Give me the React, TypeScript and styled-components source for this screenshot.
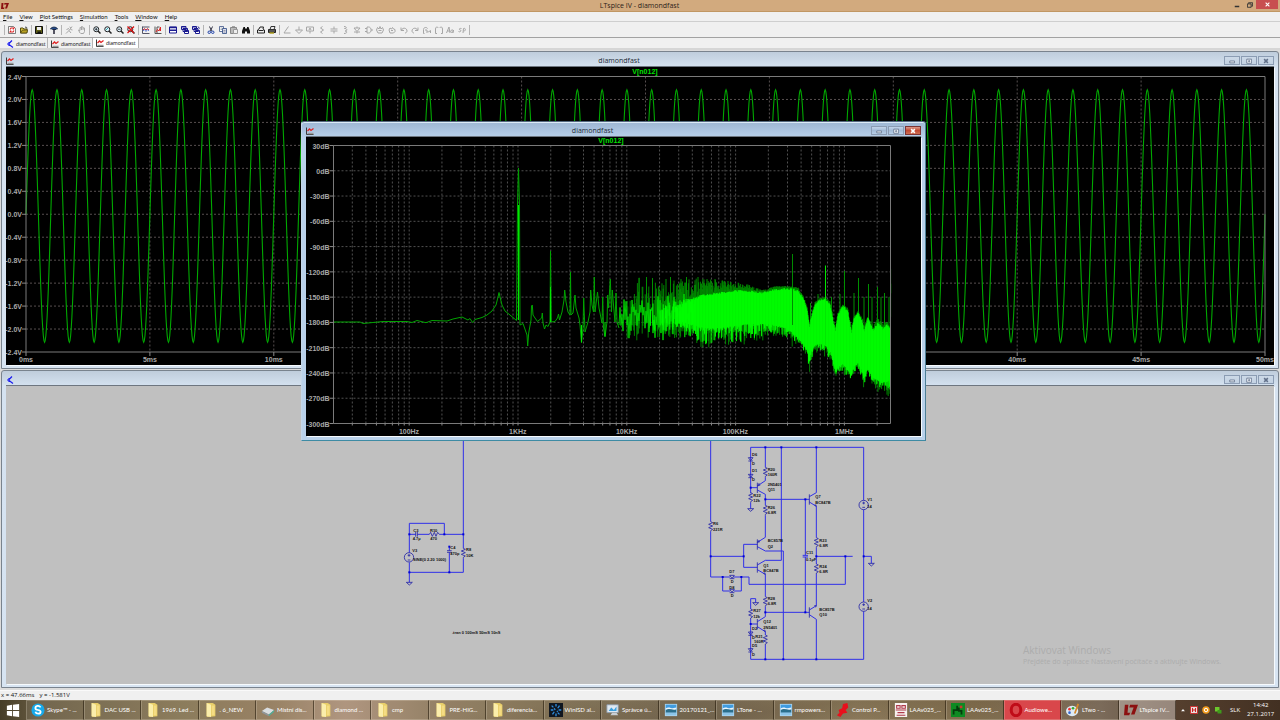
import React from "react";
import styled, { createGlobalStyle, css } from "styled-components";

const GlobalStyle = createGlobalStyle`
  * { box-sizing: border-box; }
  body { margin: 0; background: #e4e4e4; font-family: Lato, "Open Sans", sans-serif; font-size: 6px; }
  button { font: inherit; color: inherit; border: 0; padding: 0; margin: 0; background: none; }
  svg { display: block; flex-shrink: 0; }
`;

/* ---------- shell ---------- */

const Shell = styled.div`
  display: flex;
  flex-direction: column;
  min-height: 100vh;
`;

const AppTitle = styled.header`
  display: grid;
  grid-template-columns: 1fr auto 1fr;
  align-items: center;
  height: 12px;
  padding: 0 2px 0 1px;
  background: #d2aa7e;
  border-bottom: 1px solid #c19763;
`;

const AppName = styled.h1`
  margin: 0;
  font: 400 7px/11px "Open Sans", sans-serif;
  color: #2b2118;
`;

const AppControls = styled.div`
  display: flex;
  justify-content: flex-end;
  align-self: start;
`;

const AppControl = styled.button<{ $close?: boolean }>`
  display: grid;
  place-items: center;
  width: ${(p) => (p.$close ? 22 : 13)}px;
  height: 9px;
  background: ${(p) => (p.$close ? "#c84f50" : "transparent")};
`;

const MenuBar = styled.nav`
  display: flex;
  align-items: center;
  gap: 7px;
  height: 10px;
  padding: 0 3px;
  background: #f0f0f0;
  border-bottom: 1px solid #cfcfcf;
`;

const MenuItem = styled.button`
  line-height: 8px;
  color: #111;
  &::first-letter { text-decoration: underline; }
`;

const ToolBar = styled.div`
  display: flex;
  align-items: center;
  height: 16px;
  padding-left: 2px;
  background: #f0f0f0;
  border-bottom: 1px solid #a2a2a2;
`;

const ToolGroup = styled.div<{ $width: number }>`
  display: flex;
  justify-content: space-between;
  width: ${(p) => p.$width}px;
`;

const ToolSeparator = styled.span`
  width: 1px;
  height: 10px;
  margin: 0 2px;
  background: #b4b4b4;
`;

const ToolButton = styled.button`
  display: grid;
  place-items: center;
  width: 10px;
  height: 12px;
`;

const TabStrip = styled.div`
  display: flex;
  height: 12px;
  padding: 0 3px;
  background: #f0f0f0;
  border-bottom: 2px solid #d6d6d6;
`;

const DocTab = styled.button<{ $active?: boolean }>`
  display: flex;
  align-items: center;
  gap: 2px;
  width: ${(p) => (p.$active ? 46 : 45)}px;
  padding: ${(p) => (p.$active ? "0 3px 1px 3px" : "1px 2px 0 3px")};
  border-right: 1px solid #b4b4b4;
  background: ${(p) => (p.$active ? "#fff" : "transparent")};
  font: 5px/8px "Open Sans", sans-serif;
  color: #000;
`;

const Workspace = styled.main`
  position: relative;
  flex: 1;
  display: flex;
  flex-direction: column;
  gap: 1px;
  padding: 1px;
  background: #dcdcdc;
`;

/* ---------- child windows ---------- */

const activeFrame = css`
  position: absolute;
  left: 301px;
  top: 71px;
  width: 625px;
  padding-bottom: 4px;
  border-color: #54697f #4c7f97 #3d8ba4 #c4d6e8;
  background: linear-gradient(#9db6d3, #b9d1ea 16px, #b9d1ea);
  box-shadow: inset 0 1px 0 #dcebf7;
`;

const Frame = styled.section<{ $active?: boolean }>`
  border: 1px solid #79838e;
  border-radius: 3px 3px 0 0;
  padding: 0 4px 3px;
  background: linear-gradient(#bfcddc, #d5e2f0 15px, #d7e4f2);
  ${(p) => p.$active && activeFrame}
`;

const FrameTitle = styled.div`
  display: flex;
  align-items: center;
  height: 15px;
  padding-top: 2px;
`;

const FrameName = styled.h2`
  flex: 1;
  margin: 0;
  text-align: center;
  font: 400 7px/13px "Open Sans", sans-serif;
  min-height: 13px;
  color: #222b36;
`;

const FrameControls = styled.div`
  display: flex;
  gap: 1px;
`;

const FrameButton = styled.button<{ $tone: "plain" | "active" | "close" }>`
  display: grid;
  place-items: center;
  width: 16px;
  height: 9px;
  border: 1px solid ${(p) => (p.$tone === "close" ? "#7c3434" : "#8b9cb3")};
  background: ${(p) =>
    p.$tone === "close"
      ? "linear-gradient(#dc9a8c, #c24a33 50%, #cf6e52)"
      : p.$tone === "active"
        ? "linear-gradient(#c3d5e9, #a3bbd6 50%, #b7cee6)"
        : "linear-gradient(#ccd9e7, #c3d2e3)"};
`;

const FrameBody = styled.div<{ $fill: string }>`
  background: ${(p) => p.$fill};
  box-shadow: 0 -1px 0 #6e7680, 1px 1px 0 #f6fafd;
`;

const Canvas = styled.svg`
  width: 100%;
  height: auto;
`;

const Watermark = styled.aside`
  position: absolute;
  right: 50px;
  bottom: 24px;
  width: 207px;
  color: #acacac;
  font-family: "Open Sans", sans-serif;
  white-space: nowrap;
`;

const WatermarkTitle = styled.p`
  margin: 0;
  font-size: 10px;
  line-height: 13px;
`;

const WatermarkText = styled.p`
  margin: 0;
  font-size: 7px;
  line-height: 9px;
`;

/* ---------- bottom bars ---------- */

const StatusBar = styled.footer`
  display: flex;
  align-items: center;
  gap: 5px;
  height: 10px;
  padding-left: 1px;
  background: #f0f0f0;
  border-top: 1px solid #fafafa;
  font: 6px/9px "Open Sans", sans-serif;
  color: #111;
`;

const TaskBar = styled.nav`
  display: flex;
  height: 20px;
  color: #fff;
  background:
    linear-gradient(172deg, transparent 40%, rgba(60, 40, 15, 0.22) 60%, transparent 80%),
    linear-gradient(90deg, #453d28, #675a40 3%, #82714f 14%, #8f7757 21%, #a98d75 27%, #8c775a 34%, #7b6a4b 42%, #6f6149 55%, #887553 67%, #76623f 76%, #705f4c 86%, #553f2e 92%, #423022);
`;

const StartButton = styled.button`
  display: grid;
  place-items: center;
  width: 26px;
`;

const TaskList = styled.div`
  flex: 1;
  display: flex;
  min-width: 0;
`;

const tones = {
  normal: "rgba(255, 255, 255, 0.08)",
  active: "rgba(215, 205, 200, 0.5)",
  alert: "#d9474b",
};

const Task = styled.button<{ $tone: keyof typeof tones }>`
  flex: 1 1 0;
  min-width: 0;
  display: flex;
  align-items: center;
  gap: 2px;
  padding-left: 4px;
  border: 1px solid rgba(235, 225, 205, 0.25);
  border-right-color: rgba(30, 20, 5, 0.55);
  background: ${(p) => tones[p.$tone]};
  text-align: left;
`;

const TaskLabel = styled.span`
  white-space: nowrap;
  font: 6px/10px Lato, sans-serif;
`;

const Tray = styled.div`
  display: flex;
  align-items: center;
  gap: 4px;
  width: 104px;
  padding-left: 4px;
  font: 6px/9px "Open Sans", sans-serif;
`;

const Language = styled.span`
  margin-left: 4px;
`;

const Clock = styled.time`
  margin-left: 3px;
  text-align: center;
`;

/* ---------- icons ---------- */

type Glyph = React.ReactNode;

function Icon({ size = 8, children }: { size?: number; children: Glyph }) {
  return (
    <svg width={size} height={size} viewBox="0 0 16 16" fill="none" strokeWidth="2" aria-hidden="true">
      {children}
    </svg>
  );
}

const plotGlyph = (
  <>
    <path d="M1 1v14h14" stroke="#3a3a3a" />
    <path d="M3 13h12" stroke="#999" strokeWidth="3" />
    <path d="M3 8l4-4 3 3 5-4" stroke="#e02020" strokeWidth="2.500" />
  </>
);
const schematicGlyph = <path d="M12 1L6 7v2l8 6M6 4v8M5 8H2" stroke="#1a1af0" strokeWidth="2.400" />;
const ltGlyph = <path d="M5 2H1l-1 12h6l1-3H4zM7 2h9l-4 11H8l3-8H6z" fill="#8c1010" />;

const magnifier = (inner: Glyph, lens = "#dff3ff") => (
  <>
    <circle cx="6.500" cy="6.500" r="5" stroke="#222" fill={lens} />
    <path d="M10 10l5 5" stroke="#222" strokeWidth="3" />
    {inner}
  </>
);

const grey = "#a6a6a6";

const toolGroups: { width: number; tools: [string, Glyph][] }[] = [
  {
    width: 22,
    tools: [
      ["New", <><path d="M1 1h10l4 4v10H1z" fill="#fff" stroke="#555" strokeWidth="1.500" /><path d="M4 7l2-3h6l-2 3M12 9l-2 3H4l2-3" stroke="#d22" strokeWidth="2.200" /></>],
      ["Open", <><path d="M1 14V4h5l2 2h6v8z" fill="#d8c440" stroke="#5a5010" /><path d="M1 14l4-6h11l-3 6z" fill="#b8a020" stroke="#4a4210" strokeWidth="1.500" /><path d="M10 3c2-2 4 0 4 2" stroke="#333" /></>],
    ],
  },
  { width: 10, tools: [["Save", <><path d="M1 1h14v14H1z" fill="#5c5c14" stroke="#111" /><path d="M4 2h8v6H4z" fill="#eee" /><path d="M5 11h7v4H5z" fill="#111" /></>]] },
  { width: 10, tools: [["Control Panel", <><path d="M1 6c2-5 12-5 14 0-3-1-3 1-3 1H5S4 5 1 6z" fill="#234a8c" stroke="#12284c" /><path d="M8 6v10" stroke="#223" strokeWidth="3" /></>]] },
  {
    width: 23,
    tools: [
      ["Run", <path d="M9 2l3 2-4 5 4 5M8 5L3 7M8 9l-6 6M14 1l-2 3M11 7l4 1" stroke={grey} />],
      ["Halt", <path d="M4 14L1 8l3 1V3l3 1V1l3 1v2l3 0v7l-2 4H5M7 4v4M10 4v4" stroke={grey} />],
    ],
  },
  {
    width: 44,
    tools: [
      ["Zoom in", magnifier(<path d="M4 6.500h5M6.500 4v5" stroke="#111" strokeWidth="1.500" />)],
      ["Pan", magnifier(<path d="M4 8l4-4" stroke="#3aa" />)],
      ["Zoom out", magnifier(<path d="M4 6.500h5" stroke="#111" strokeWidth="1.500" />)],
      ["Zoom extents", magnifier(<path d="M1 1l13 13M14 1L1 14" stroke="#d11" strokeWidth="2.500" />)],
    ],
  },
  {
    width: 22,
    tools: [
      ["Autorange", <><path d="M1 1v14h14M1 2h14" stroke="#556" /><path d="M2 8l3-3 3 3 3-3 3 3" stroke="#d33" /><path d="M2 10l3-3 3 4 3-4 3 3" stroke="#35c" strokeWidth="1.500" /></>],
      ["Pick traces", <><path d="M2 1v14h13M6 15V2h5" stroke="#555" /><path d="M4 12l3-5 3 3 3-8v8" stroke="#d22" /></>],
    ],
  },
  {
    width: 33,
    tools: [
      ["Tile", <><path d="M1 2h14v12H1z" fill="#fff" stroke="#1a1a90" /><path d="M1 3h14M1 8.500h14" stroke="#1a1a90" strokeWidth="3" /></>],
      ["Cascade", <><path d="M1 1h9v6H1zM4 5h9v6H4zM7 9h8v6H7z" fill="#fff" stroke="#1a1a90" /><path d="M1 2h9M4 6h9M7 10h8" stroke="#1a1a90" /></>],
      ["Close all", <><path d="M1 1h8v6H1zM4 5h8v6H4zM7 9h8v6H7z" fill="#fff" stroke="#1a1a90" /><path d="M1 2h8M4 6h8M7 10h8M12 1l3 4" stroke="#1a1a90" /></>],
    ],
  },
  {
    width: 45,
    tools: [
      ["Cut", <><path d="M5 1l4 9M11 1L7 10" stroke="#334" /><circle cx="4.500" cy="12.500" r="2.500" stroke="#24a" /><circle cx="11.500" cy="12.500" r="2.500" stroke="#24a" /></>],
      ["Copy", <><path d="M1 1h8v10H1z" fill="#fff" stroke="#334a80" strokeWidth="1.500" /><path d="M7 5h8v10H7z" fill="#dde" stroke="#22407a" strokeWidth="1.500" /><path d="M9 9h4M9 12h4M3 4h4M3 7h3" stroke="#456" strokeWidth="1" /></>],
      ["Paste", <><path d="M1 3h12v12H1z" fill="#bbb" stroke="#888" /><path d="M7 7h8v8H7z" fill="#eee" stroke="#999" /><path d="M4 2h6" stroke="#888" strokeWidth="3" /></>],
      ["Find", <path d="M3 2h3v3h4V2h3l3 8v5h-6v-4H6v4H0v-5z" fill="#111" />],
    ],
  },
  {
    width: 21,
    tools: [
      ["Print preview", <path d="M1 14V8l3-2 2-4h7l-1 4 3 2v6zM3 9h10" stroke="#222" fill="#eee" />],
      ["Print", <><path d="M1 13V7h14v6z" fill="#555" stroke="#222" /><path d="M4 7l2-6h8l-2 6z" fill="#eee" stroke="#333" /><path d="M3 14h9" stroke="#b0a020" strokeWidth="3" /></>],
    ],
  },
  {
    width: 185,
    tools: [
      ["Wire", <path d="M11 1L4 11l-2 3h13" stroke={grey} />],
      ["Ground", <path d="M8 1v7M1 8h14L8 15z" stroke={grey} />],
      ["Label net", <path d="M1 2h14v8H1zM8 10v5M6 8l2-4 2 4" stroke={grey} />],
      ["Resistor", <path d="M9 1L5 4l6 4-6 4 4 3" stroke={grey} />],
      ["Capacitor", <path d="M8 1v5M1 6h14M1 10h14M8 10v5" stroke={grey} />],
      ["Inductor", <path d="M6 1c6 0 6 4 1 4 6 0 6 5 1 5 5 0 5 5-2 5" stroke={grey} />],
      ["Diode", <path d="M8 1v3M2 4h12L8 11zM2 12h12M8 12v3" stroke={grey} />],
      ["Component", <path d="M0 5h4M0 11h4M4 2v12h3c7 0 7-12 0-12zM12 8h4" stroke={grey} />],
      ["Move", <path d="M4 14L1 8l2-5 3 3 2-5 2 5 3-3 2 5-3 6zM5 9h6" stroke={grey} />],
      ["Drag", <path d="M4 14L2 8l2-4 3 2 2-3 2 3 3 1v4l-3 3zM6 9h4" stroke={grey} />],
      ["Undo", <path d="M2 3v6h6M3 8c3-6 11-4 11 2 0 2-2 4-4 4" stroke={grey} />],
      ["Redo", <path d="M14 3v6H8M13 8C10 2 2 4 2 10c0 2 2 4 4 4" stroke={grey} />],
      ["Rotate", <path d="M3 15H1V7c0-5 7-5 8-2M4 8h4M8 14V9l3 3 4-3v5" stroke={grey} />],
      ["Mirror", <path d="M4 15H1V6c0-5 5-5 5-2M12 15h3V6c0-5-5-5-5-2" stroke={grey} />],
      ["Text", <path d="M1 14L6 2l2 12M3 10h5M14 8c-6-1-6 6-1 5l2-5-1 6" stroke={grey} />],
      ["SPICE directive", <path d="M7 5c-6-1-5 3-2 3 2 2-1 5-4 3M10 14l1-9c5-2 5 6 0 5" stroke={grey} />],
    ],
  },
];

const folderGlyph = (
  <>
    <path d="M3 0h7l3 2v13l-9 1-1-1z" fill="#e9cf6a" />
    <path d="M3 0l5 2v14l-5-1z" fill="#fbeeab" />
    <path d="M9 3h3v11H9z" fill="#f5dc83" />
  </>
);
const pictureGlyph = (
  <>
    <path d="M1 1h14v14H1z" fill="#a9d3ee" />
    <path d="M2 2h12v6H2z" fill="#3f9be0" />
    <path d="M2 6c3-2 6 0 8 0l4-1v3H2z" fill="#e8f4fc" />
    <path d="M2 8c4-3 8 1 12-1v4H2z" fill="#2b6f8c" />
    <path d="M2 11h12v3H2z" fill="#8cc5e8" />
  </>
);

const tasks: { label: string; glyph: Glyph; tone?: keyof typeof tones }[] = [
  { label: "Skype™ - ...", glyph: <><circle cx="8" cy="8" r="7.500" fill="#16a9ea" /><path d="M11 5C9 2 5 3 5 6c0 3 6 1 6 4 0 3-5 3-6 0" stroke="#fff" /></> },
  { label: "DAC USB ...", glyph: folderGlyph },
  { label: "1969. Led ...", glyph: folderGlyph },
  { label: ". 6_NEW", glyph: folderGlyph },
  { label: "Místní dis...", glyph: <><path d="M1 9l6-4 8 3-6 5z" fill="#d9dde0" /><path d="M1 9l8 4v2l-8-4z" fill="#8e969c" /><path d="M9 13l6-5v2l-6 5z" fill="#4fae9a" /></> },
  { label: "diamond ...", glyph: folderGlyph },
  { label: "cmp", glyph: folderGlyph },
  { label: "PRE-HIG...", glyph: folderGlyph },
  { label: "diferencia...", glyph: folderGlyph },
  { label: "WinISD al...", glyph: <><path d="M0 0h16v16H0z" fill="#10161f" /><path d="M3 3l2 2M8 1v3M12 3l-2 3M2 8h3M11 8h3M4 13l2-3M8 12v3M12 13l-2-2M6 6l1 2M9 9l1 1" stroke="#2f8fe0" strokeWidth="1.500" /></> },
  { label: "Správce ú...", glyph: <><path d="M1 2h13v9H1z" fill="#dfe9f2" stroke="#8b98a5" strokeWidth="1" /><path d="M3 9l3-4 3 3 3-4v5z" fill="#3aa0dd" /><path d="M5 14h9l-2-3H7z" fill="#c9cfd4" /></> },
  { label: "20170121_...", glyph: pictureGlyph },
  { label: "LTone - ...", glyph: pictureGlyph },
  { label: "rmpowers...", glyph: pictureGlyph },
  { label: "Control P...", glyph: <path d="M8 1l5-1 1 5-3 3 2 3-5 1-3 4-4-2 3-3-1-3 4-2z" fill="#e8101c" /> },
  { label: "LAAv025_...", glyph: <><path d="M1 0h14v16H1z" fill="#f7f1ef" /><path d="M3 3h4v3H3zM9 3h4v3H9zM2 8h12M4 11h8M3 14h10" stroke="#b03a4a" strokeWidth="1.200" /></> },
  { label: "LAAv025_...", glyph: <><path d="M0 0h16v16H0z" fill="#0d8a22" /><path d="M3 13V8h4V3M12 13V9H9V5" stroke="#043c0c" /><path d="M10 3h3v3h-3z" fill="#c33" /></> },
  { label: "Audiowe...", tone: "alert", glyph: <ellipse cx="8" cy="8" rx="5.500" ry="6.500" stroke="#c00c18" strokeWidth="3.500" /> },
  { label: "LTwo - ...", glyph: <><ellipse cx="7" cy="9" rx="7" ry="6" fill="#dceaf4" /><circle cx="4" cy="7" r="1.500" fill="#e33" /><circle cx="8" cy="6" r="1.500" fill="#3a3" /><circle cx="4" cy="11" r="1.500" fill="#36c" /><path d="M14 1l-4 11" stroke="#d78a2a" /></> },
  { label: "LTspice IV...", tone: "active", glyph: ltGlyph },
];

/* ---------- transient plot ---------- */

const range = (n: number) => Array.from({ length: n }, (_, i) => i);

const axisText = { fontFamily: '"Liberation Sans", Arial, sans-serif', fontSize: 7, fontWeight: 700, fill: "#a8a8a8" };
const traceText = { ...axisText, fill: "#00e000", textAnchor: "middle" as const };

function TransientPlot() {
  const left = 20, right = 1259, top = 9.5, bottom = 285;
  const dx = (right - left) / 10;
  const dy = (bottom - top) / 12;
  const mid = (top + bottom) / 2;
  const samples = range(2001).map((i) => {
    const x = left + ((right - left) * i) / 2000;
    const s = Math.sin((i / 2000) * 50 * 2 * Math.PI);
    return `${x.toFixed(2)},${(mid - s * (s > 0 ? 124.5 : 128)).toFixed(2)}`;
  });
  return (
    <Canvas viewBox="0 0 1268 298" role="img" aria-label="Waveform of V[n012]">
      <g stroke="#564f4f" strokeDasharray="2 2">
        {range(11).map((i) => <path key={i} d={`M${left} ${top + dy * (i + 1)}H${right}`} />)}
        {range(9).map((i) => <path key={i} d={`M${left + dx * (i + 1)} ${top}V${bottom}`} />)}
      </g>
      <polyline points={samples.join(" ")} fill="none" stroke="#00a800" strokeWidth="1.100" />
      <path d={`M${left} ${top}H${right}V${bottom}H${left}z`} fill="none" stroke="#7a7a7a" />
      <g stroke="#8a8a8a">
        {range(13).map((i) => <path key={i} d={`M${left - 4} ${top + dy * i}h4`} />)}
        {range(11).map((i) => <path key={i} d={`M${left + dx * i} ${bottom}v4`} />)}
      </g>
      {range(13).map((i) => (
        <text key={i} {...axisText} x={left - 4} y={top + dy * i + 3} textAnchor="end">{`${(2.4 - 0.4 * i).toFixed(1).replace("-0.0", "0.0")}V`}</text>
      ))}
      {range(11).map((i) => (
        <text key={i} {...axisText} x={left + dx * i} y={295} textAnchor="middle">{`${i * 5}ms`}</text>
      ))}
      <text {...traceText} x={639} y={7}>V[n012]</text>
    </Canvas>
  );
}

/* ---------- spectrum plot ---------- */

const lowTrace =
  "M333 322L360 322 363 323.500 383 321.500 407 321.500 412 322.500 417 320.500 426 322.700 432 320.500 447 321 453 319 462 317 468 320 470 318.500 472.500 322.500 475 319.500 482 317.500 487 315 492 311 496 305 498 297 499 292.500 500 297 502 305 505 311 510 315 516.500 320.500 517.500 205 518.500 168 519.500 205 520 325 523 323.500 527 335 527.700 346 528.700 333 531 320 531.500 306 532.300 305 533 315 535 318 537.500 321.500 541.700 318 542.300 313 543 323 544.500 329 546 325 548 326.500 550 322 550.500 251 551.300 322 555 321.500 557.500 318 558.500 314 559.500 320 562 312 564 300 564.700 290 566 302 568 312 570 315 570.500 272 571 315 573 313 575 295 576 308 579 318 580 325 581.500 343 583 328 583.700 298 585 332 588 322 590 312 590.700 290 592 305 593.500 312 594.300 277 595 312 597.500 292 599 308 602 323 602.700 297 603.500 328 605 337 607 322 607.700 295 608.500 308 610.300 279 611.500 312 612.300 290 613.500 305 615 322 616 293 617 322 619 328";

/* [x, highest dim peak, bright top, bright bottom, lowest dim dip] */
const envelope = [
  [619, 278, 308, 327, 340],
  [640, 277, 306, 324, 341],
  [660, 277, 303, 322, 340],
  [675, 278, 302, 324, 338],
  [690, 278, 298, 325, 342],
  [705, 279, 294, 328, 350],
  [720, 280, 292, 328, 343],
  [735, 282, 290, 326, 347],
  [747, 284, 290, 324, 345],
  [762, 290, 292, 324, 341],
  [775, 286, 289, 325, 336],
  [785, 286, 288, 328, 337],
  [792, 286, 288, 332, 347],
  [798, 287, 290, 338, 346],
  [803, 295, 297, 344, 352],
  [807, 305, 308, 350, 358],
  [809.5, 322, 327, 361, 374],
  [811, 316, 318, 352, 361],
  [815, 302, 304, 345, 353],
  [820, 298, 299, 344, 352],
  [825, 297, 298, 345, 357],
  [830, 301, 303, 350, 362],
  [833, 315, 320, 360, 368],
  [835.5, 325, 330, 372, 379],
  [838, 312, 314, 367, 372],
  [843, 304, 305, 364, 376],
  [848, 308, 311, 370, 380],
  [851.5, 327, 332, 374, 382],
  [854, 316, 318, 366, 374],
  [858, 311, 312, 363, 370],
  [862, 317, 320, 371, 385],
  [864, 326, 330, 377, 396],
  [868, 316, 317, 368, 378],
  [873, 325, 330, 378, 386],
  [878, 318, 322, 380, 392],
  [883, 324, 328, 382, 394],
  [887, 321, 323, 382, 399],
  [890, 326, 328, 380, 397],
];

/* Strong single lines: [x, top] */
const harmonics = [
  [639, 278], [646.5, 277], [652.5, 278], [666, 279], [670.5, 277], [681, 279], [686.5, 277],
  [698, 277], [707, 279], [715, 279], [728, 281], [792.5, 254], [810.5, 303], [818, 294],
  [844.5, 271], [840, 294], [831.5, 297], [858.5, 278], [854, 293], [868.5, 284], [864, 297],
  [872, 297], [877.5, 287], [881, 297], [884.5, 293], [889, 297],
];

function envelopeAt(x: number) {
  const k = Math.max(1, envelope.findIndex((p) => p[0] >= x));
  const a = envelope[k - 1];
  const b = envelope[k];
  const t = (x - a[0]) / (b[0] - a[0]);
  return a.map((v, j) => v + (b[j] - v) * t);
}

function noise(i: number) {
  const v = Math.sin(i * 12.9898 + 4.137) * 43758.5453;
  return v - Math.floor(v);
}

function buildSpectrum() {
  let dim = "";
  let bright = "";
  const wiggle = range(76).map((i) => {
    const swing = i % 2 ? -noise(i + 60) * 16 : Math.pow(noise(i + 60), 1.5) * 22;
    return `${619 + i} ${(315 + Math.sin(i * 0.75) * 6 + swing).toFixed(1)}`;
  });
  range(452).forEach((i) => {
    const x = 620 + i * 0.6;
    const [, peak, top, bottom, dip] = envelopeAt(x);
    const density = Math.min(1, Math.max(0, (x - 650) / 50));
    const dense = density === 1;
    const up = Math.pow(noise(i), dense ? 0.7 : 1.8);
    const down = Math.pow(noise(i + 900), 2);
    if (x > 655 || noise(i + 77) > 0.62) {
      dim += `M${x.toFixed(1)} ${(top - (top - peak) * up).toFixed(1)}V${(bottom + (dip - bottom) * down).toFixed(1)}`;
    }
    if (noise(i + 40) < density * 1.6) {
      const shrink = (1 - density) * noise(i + 300) * 8;
      const shift = (1 - density) * (noise(i + 500) - 0.5) * 14;
      const spike = Math.pow(noise(i + 210), 3) * (dip - bottom) * 0.8;
      bright += `M${x.toFixed(1)} ${(top + shrink + shift + noise(i + 700) * 2).toFixed(1)}V${(bottom - shrink + shift + spike).toFixed(1)}`;
    }
  });
  const lines = harmonics.map(([x, y]) => `M${x} ${y}V${envelopeAt(x)[3].toFixed(1)}`).join("");
  return { dim, bright, lines, wiggle: wiggle.join(" ") };
}

function SpectrumPlot() {
  const { dim, bright, lines, wiggle } = buildSpectrum();
  const left = 333.5, right = 890.5, top = 145.5, bottom = 423.5;
  const dy = (bottom - top) / 11;
  const decade = 108.8;
  const ticks = range(6).flatMap((d) => range(9).map((m) => 300.4 + decade * (d + Math.log10(m + 1)))).filter((x) => x > left + 2 && x < right);
  return (
    <Canvas viewBox="306 137 615 299" role="img" aria-label="Spectrum of V[n012]">
      <g stroke="#505050" strokeDasharray="2 2">
        {range(10).map((i) => <path key={i} d={`M${left} ${top + dy * (i + 1)}H${right}`} />)}
        {ticks.map((x) => <path key={x} d={`M${x} ${top}V${bottom}`} />)}
      </g>
      <path d={dim} stroke="#009000" strokeWidth=".9" />
      <path d={lines} stroke="#009000" />
      <polyline points={wiggle} fill="none" stroke="#00dc00" strokeWidth=".9" />
      <path d={bright} stroke="#00ff00" />
      <path d={lowTrace} fill="none" stroke="#00a400" />
      <path d="M518.500 205V320M550.500 287V322M581.500 325V342M605 322V336" stroke="#00e800" />
      <path d="M825.500 265.500V345" stroke="#00e800" />
      <path d="M792.500 254V325" stroke="#008a00" />
      <path d={`M${left} ${top}H${right}V${bottom}H${left}z`} fill="none" stroke="#7a7a7a" />
      <g stroke="#8a8a8a">
        {range(12).map((i) => <path key={i} d={`M${left - 4} ${top + dy * i}h4`} />)}
        {ticks.map((x) => <path key={x} d={`M${x} ${bottom}v2`} />)}
      </g>
      {range(12).map((i) => (
        <text key={i} {...axisText} x={left - 4} y={top + dy * i + 3} textAnchor="end">{`${30 - 30 * i}dB`}</text>
      ))}
      {["100Hz", "1KHz", "10KHz", "100KHz", "1MHz"].map((label, i) => (
        <text key={label} {...axisText} x={409 + decade * i} y={434} textAnchor="middle">{label}</text>
      ))}
      <text {...traceText} x={611} y={143}>V[n012]</text>
    </Canvas>
  );
}

/* ---------- schematic ---------- */

/* Symbols are drawn on a grid of three units to the pixel. */
const vResistor = (x: number, y: number) => `M${x} ${y}l6 3-12 5 12 5-12 5 12 5-6 4v3`;
const ground = (x: number, y: number) => `M${x - 9} ${y}h18l-9 8z`;
const vDiode = (x: number, y: number) => `M${x - 7} ${y - 5}h14l-7 9zM${x - 7} ${y + 5}h14`;
const bar = (x: number, y: number) => `M${x} ${y}v31`;

const rightWires = [
  "M32 0V245M32 275V411H90M32 349H131V313H172M131 349V382H172",
  "M68 411V453H90M102 453H124V411M100 411H147V433H436V349M349 349H458",
  "M152 22H491V181M491 209V349H514V370M491 349V486M491 514V658H152",
  "M152 22V160M152 188V206M152 143H172",
  "M196 22V82M196 112V122L172 138M172 150L196 163V196M196 226V292L172 307M172 320L196 333H250V658",
  "M244 22V361H196L172 375M172 389L196 403V470M196 500V530L172 545M172 560L196 575V585M196 615V658",
  "M196 178H328M349 22V158L328 170M328 186L349 199V293M349 323V372M349 402V497L328 510M328 524L349 538V658",
  "M196 517H328M316 178V346M316 351V517M308 346H324M308 351H324",
  "M167 488V476H152V507M152 537V658M152 552H172",
].join("");

const rightSymbols = [
  vResistor(32, 245), vResistor(152, 158), vResistor(196, 82), vResistor(196, 196), vResistor(196, 470),
  vResistor(196, 585), vResistor(349, 293), vResistor(349, 372), vResistor(152, 507),
  ground(152, 206), ground(514, 370), ground(167, 488),
  vDiode(152, 58), vDiode(152, 108), vDiode(152, 581), vDiode(152, 631), vDiode(96, 411), vDiode(96, 453),
  bar(172, 128), bar(172, 298), bar(172, 367), bar(172, 537), bar(328, 163), bar(328, 502),
  "M190 400l6 3-2-6M190 571l6 4-2-6M343 195l6 4-2-6M178 129l-6 9 9-3M178 300l-6 7 8-2M343 497l6 0-2 5",
  "M477 195a14 14 0 1 0 28 0a14 14 0 1 0-28 0M491 185v8M487 189h8M487 202h8",
  "M477 500a14 14 0 1 0 28 0a14 14 0 1 0-28 0M491 490v8M487 494h8M487 507h8",
].join("");

const rightNodes = [
  [32, 349], [131, 349], [68, 411], [124, 411], [196, 22], [244, 22], [349, 22], [152, 143], [196, 178],
  [316, 178], [349, 349], [436, 349], [491, 349], [196, 517], [316, 517], [152, 552], [196, 658], [250, 658], [349, 658],
];

const leftWires =
  "M220-180V145M220 175V217H58M58 158V70H163V103M58 103H77M82 103H118M148 103H220M58 187V247M178 140V152M178 157V217";
const leftSymbols =
  "M77 96v14M82 96v14M118 103l4-6 5 12 6-12 5 12 5-12 5 6M171 152h14M171 157h14" +
  vResistor(220, 145) + ground(58, 247) + "M43 172a14 14 0 1 0 28 0a14 14 0 1 0-28 0M57 162v8M53 166h8M53 180h8";
const leftNodes = [[58, 103], [163, 103], [220, 103], [58, 217], [178, 217], [178, 140]];

type Label = [number, number, string];

const rightLabels: Label[] = [
  [156, 47, "D6"], [156, 74, "D"], [156, 96, "D1"], [156, 123, "D"], [203, 93, "R20"], [203, 109, "160R"],
  [203, 138, "2N5401"], [203, 154, "Q11"], [160, 171, "R22"], [160, 187, "12k"], [203, 206, "R26"], [203, 222, "6.8R"],
  [346, 175, "Q7"], [346, 191, "BC847B"], [502, 183, "V1"], [502, 205, "14"], [39, 256, "R6"], [39, 272, "221R"],
  [203, 307, "BC857B"], [203, 323, "Q2"], [190, 380, "Q1"], [190, 396, "BC847B"], [358, 306, "R23"], [358, 322, "6.8R"],
  [318, 342, "C11"], [318, 363, "0.1µF"], [358, 383, "R24"], [358, 399, "6.8R"], [88, 400, "D7"], [92, 430, "D"],
  [88, 446, "D8"], [92, 471, "D"], [203, 480, "R28"], [203, 496, "6.8R"], [160, 517, "R27"], [160, 533, "12k"],
  [190, 550, "Q12"], [190, 566, "2N5401"], [156, 570, "D2"], [156, 598, "D"], [166, 594, "R21"], [162, 610, "160R"],
  [156, 621, "D5"], [156, 648, "D"], [358, 513, "BC857B"], [358, 529, "Q10"], [502, 487, "V2"], [502, 509, "14"],
];

const leftLabels: Label[] = [
  [70, 96, "C3"], [68, 121, "4.7µ"], [120, 96, "R10"], [121, 121, "470"], [67, 157, "V3"], [69, 182, "SINE(0 2.20 1000)"],
  [181, 146, "C4"], [181, 166, "470p"], [228, 153, "R8"], [228, 170, "10K"], [186, 401, ".tran 0 100mS 50mS 10nS"],
];

function Circuit({ x, y, wires, symbols, nodes, labels }: { x: number; y: number; wires: string; symbols: string; nodes: number[][]; labels: Label[] }) {
  return (
    <>
      <g transform={`translate(${x} ${y}) scale(${1 / 3})`} fill="none">
        <path d={wires} stroke="#3030e8" strokeWidth="3" />
        <path d={symbols} stroke="#2a2aa8" strokeWidth="2.600" />
        {nodes.map(([nx, ny]) => <rect key={`${nx}-${ny}`} x={nx - 3} y={ny - 3} width="6" height="6" fill="#0000d8" />)}
      </g>
      {labels.map(([lx, ly, text]) => (
        <text key={`${lx}-${ly}`} x={x + lx / 3} y={y + ly / 3} fontFamily='"Liberation Sans", Arial, sans-serif' fontSize="4" fontWeight="700" fill="#111">
          {text}
        </text>
      ))}
    </>
  );
}

function Schematic() {
  return (
    <Canvas viewBox="6 386 1268 298" role="img" aria-label="Amplifier schematic">
      <Circuit x={390} y={500} wires={leftWires} symbols={leftSymbols} nodes={leftNodes} labels={leftLabels} />
      <Circuit x={700} y={440} wires={rightWires} symbols={rightSymbols} nodes={rightNodes} labels={rightLabels} />
    </Canvas>
  );
}

/* ---------- window ---------- */

const controlGlyphs: [string, Glyph][] = [
  ["Minimize", <path d="M2 8h13v5H2z" />],
  ["Maximize", <path d="M2 3h13v11H2zM7 7h3v3H7z" />],
  ["Close", <path d="M3 3l10 10M13 3L3 13" strokeWidth="4" />],
];

function ChildWindow({ name, glyph, fill, active, children }: { name: string; glyph: Glyph; fill: string; active?: boolean; children: React.ReactNode }) {
  return (
    <Frame $active={active}>
      <FrameTitle>
        <Icon>{glyph}</Icon>
        <FrameName>{name}</FrameName>
        <FrameControls>
          {controlGlyphs.map(([label, shape]) => {
            const close = active && label === "Close";
            return (
              <FrameButton key={label} aria-label={label} $tone={close ? "close" : active ? "active" : "plain"}>
                <svg width="6" height="6" viewBox="0 0 16 16" fill="#f4f8fc" stroke={close ? "#fff" : "#62718a"} strokeWidth="2.200">
                  {shape}
                </svg>
              </FrameButton>
            );
          })}
        </FrameControls>
      </FrameTitle>
      <FrameBody $fill={fill}>{children}</FrameBody>
    </Frame>
  );
}

export default function App() {
  return (
    <Shell>
      <GlobalStyle />
      <AppTitle>
        <Icon>{ltGlyph}</Icon>
        <AppName>LTspice IV - diamondfast</AppName>
        <AppControls>
          <AppControl aria-label="Minimize"><Icon size={6}><path d="M2 12h12" stroke="#333" strokeWidth="4" /></Icon></AppControl>
          <AppControl aria-label="Restore"><Icon size={6}><path d="M1 5h10v9H1zM4 4V2h11v9h-3" stroke="#333" strokeWidth="2.500" /></Icon></AppControl>
          <AppControl aria-label="Close" $close><Icon size={5}><path d="M2 2l12 12M14 2L2 14" stroke="#fff" strokeWidth="3.500" /></Icon></AppControl>
        </AppControls>
      </AppTitle>
      <MenuBar>
        {["File", "View", "Plot Settings", "Simulation", "Tools", "Window", "Help"].map((item) => <MenuItem key={item}>{item}</MenuItem>)}
      </MenuBar>
      <ToolBar>
        {toolGroups.map((group, i) => (
          <React.Fragment key={i}>
            <ToolSeparator />
            <ToolGroup $width={group.width}>
              {group.tools.map(([label, glyph]) => (
                <ToolButton key={label} aria-label={label}><Icon>{glyph}</Icon></ToolButton>
              ))}
            </ToolGroup>
          </React.Fragment>
        ))}
        <ToolSeparator />
      </ToolBar>
      <TabStrip>
        <DocTab><Icon>{schematicGlyph}</Icon>diamondfast</DocTab>
        <DocTab><Icon>{plotGlyph}</Icon>diamondfast</DocTab>
        <DocTab $active><Icon>{plotGlyph}</Icon>diamondfast</DocTab>
      </TabStrip>
      <Workspace>
        <ChildWindow name="diamondfast" glyph={plotGlyph} fill="#000"><TransientPlot /></ChildWindow>
        <ChildWindow name="" glyph={schematicGlyph} fill="#c0c0c0"><Schematic /></ChildWindow>
        <ChildWindow name="diamondfast" glyph={plotGlyph} fill="#000" active><SpectrumPlot /></ChildWindow>
        <Watermark>
          <WatermarkTitle>Aktivovat Windows</WatermarkTitle>
          <WatermarkText>Přejděte do aplikace Nastavení počítače a aktivujte Windows.</WatermarkText>
        </Watermark>
      </Workspace>
      <StatusBar><span>x = 47.66ms</span><span>y = -1.581V</span></StatusBar>
      <TaskBar>
        <StartButton aria-label="Start">
          <Icon size={14}><path d="M1 3l6-1v6H1zM8 2l7-1v7H8zM1 9h6v6l-6-1zM8 9h7v7l-7-1z" fill="#fff" /></Icon>
        </StartButton>
        <TaskList>
          {tasks.map((task, i) => (
            <Task key={i} $tone={task.tone ?? "normal"}>
              <Icon size={14}>{task.glyph}</Icon>
              <TaskLabel>{task.label}</TaskLabel>
            </Task>
          ))}
        </TaskList>
        <Tray>
          <Icon size={6}><path d="M3 11l5-6 5 6z" fill="#fff" /></Icon>
          <Icon><path d="M1 1h14v14H1z" fill="#e8dada" stroke="#c33" /><path d="M5 4v8M11 4v8M5 8h6" stroke="#c22" /></Icon>
          <Icon><circle cx="8" cy="8" r="7.500" fill="#f39a1c" /><circle cx="8" cy="8" r="3.500" stroke="#fff" /></Icon>
          <Icon><path d="M2 2h9v9H2z" fill="#6cc82c" /><path d="M7 8h8v7H7z" fill="#3f9a1c" /></Icon>
          <Language>SLK</Language>
          <Clock>14:42<br />27.1.2017</Clock>
        </Tray>
      </TaskBar>
    </Shell>
  );
}
